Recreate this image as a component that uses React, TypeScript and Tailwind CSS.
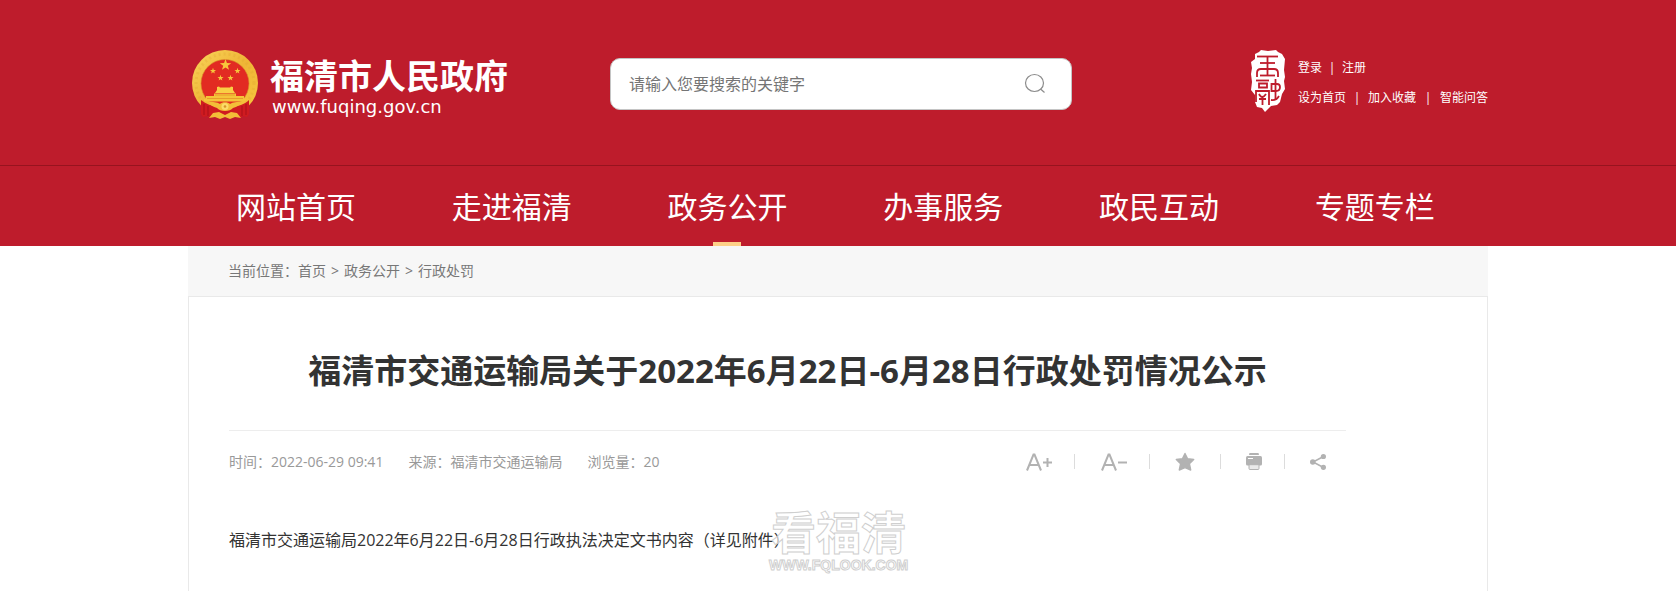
import React from 'react';

const navItems = ['网站首页', '走进福清', '政务公开', '办事服务', '政民互动', '专题专栏'];

const breadcrumbs = ['首页', '政务公开', '行政处罚'];

const star = (cx: number, cy: number, r: number) =>
  Array.from({ length: 10 }, (_, i) => {
    const radius = i % 2 === 0 ? r : r * 0.4;
    const angle = (Math.PI / 5) * i - Math.PI / 2;
    return `${cx + radius * Math.cos(angle)},${cy + radius * Math.sin(angle)}`;
  }).join(' ');

const Emblem = () => (
  <svg className="w-[68px] h-[70px]" viewBox="0 0 68 70" aria-hidden="true">
    <defs>
      <linearGradient id="gold" x1="0" y1="0" x2="1" y2="1">
        <stop offset="0" stopColor="#f9d65b" />
        <stop offset="0.5" stopColor="#efb536" />
        <stop offset="1" stopColor="#f7c93f" />
      </linearGradient>
    </defs>
    <circle cx="33" cy="33" r="33" fill="url(#gold)" />
    <circle cx="33" cy="33" r="29" fill="none" stroke="#dd9f2c" strokeWidth="3" strokeDasharray="2 3" opacity="0.25" />
    <circle cx="33" cy="33.500" r="24" fill="#e22b22" stroke="#d9902a" strokeWidth="0.6" />
    {/* Stars */}
    <polygon points={star(33.5, 15, 6)} fill="#f7c63c" />
    <polygon points={star(21, 21, 3.2)} fill="#f7c63c" />
    <polygon points={star(45.500, 21, 3.2)} fill="#f7c63c" />
    <polygon points={star(28.5, 28, 3.2)} fill="#f7c63c" />
    <polygon points={star(38.5, 28, 3.2)} fill="#f7c63c" />
    {/* Tiananmen gate */}
    <path d="M25 37 L27 36.500 L28 37.500 L38 37.500 L39 36.500 L41 37 L41 40 L43 43 L23 43 L25 40 Z" fill="#f9cf45" />
    <path d="M22 43.5 H44 V46 H52 V49 H54 V51.500 H12 V49 H14 V46 H22 Z" fill="#f5c43a" />
    <path d="M23 45 H43 M15 48.500 H51" stroke="#e38b25" strokeWidth="0.7" />
    {/* Ribbon and gear */}
    <path d="M9 50 C14 54 20 56 26 57 L40 57 C47 56 53 54 57 50 L57 64 L55 67 L51 66 L48 68 L44 66 L22 66 L18 68 L15 66 L11 67 L9 64 Z" fill="#cf1b20" />
    <path d="M12 54 V65 M16 56 V66 M50 56 V66 M54 54 V65" stroke="#a91019" strokeWidth="1" />
    <path
      d="M16 51.500 C21 52 25 52 28 54 C30 51.500 36 51.500 38 54 C41 52 45 52 50 51.500 C48 55 45 57 41 58 C38 62 28 62 25 58 C21 57 18 55 16 51.500 Z"
      fill="#f3be38"
    />
    <path d="M17 68 L21 63 L27 62 L33 65 L39 62 L45 63 L49 68 L43 67 L38 69 L33 67 L28 69 L23 67 Z" fill="#f3be38" />
    <circle cx="33" cy="56.500" r="3.500" fill="#fbdc69" />
    <circle cx="33" cy="56.500" r="1.300" fill="#d8932a" />
  </svg>
);

const Seal = () => (
  <svg className="w-[34px] h-[62px]" viewBox="0 0 34 62" aria-hidden="true">
    <path
      d="M8 2 L10 0 L17 1 L25 0 L27 2 L31 4 L34 9 L33 20 L34 27 L33 31 L34 39 L31 44 L29 52 L26 55 L20 56 L16 60 L14 62 L11 58 L6 57 L4 52 L4 45 L0 40 L1 32 L0 24 L1 18 L0 12 L4 9 L4 4 Z"
      fill="#fff"
    />
    {/* Seal script strokes */}
    <g fill="none" stroke="#be1c2c" strokeWidth="1.8">
      <path d="M6 6.500 H27" />
      <path d="M16.500 7 V25" />
      <path d="M9 13 H24" />
      <path d="M6 27 V23 Q6 19 10 19 H23 Q27 19 27 23 V27" />
      <path d="M9 25.500 H24" />
      <path d="M5 30.500 H18" />
      <path d="M8 33.500 H16 V37.500 H8 Z" />
      <path d="M5 52 V41 H18 V55" />
      <path d="M8 44 Q11 50 15 44 M8 49 H15 M11.500 47 V55" />
      <path d="M24.500 29 V50" />
      <path d="M20.500 34 H26 Q29 34 29 37 Q29 41 25 41 H20.500 Z" />
      <path d="M20 50 Q25 51 28 46" />
    </g>
  </svg>
);

const Header = () => (
  <header className="bg-[#be1c2c] text-white">
    <div className="max-w-[1300px] mx-auto pt-[50px] pb-[45px] grid grid-cols-[422px_462px_1fr] items-start">
      {/* Logo */}
      <a href="#home" className="flex pl-1 gap-[10px]">
        <Emblem />
        <span className="pt-[6px]">
          <span className="block text-[34px] leading-10 font-bold">福清市人民政府</span>
          <span className="block pl-[2px] text-lg leading-[22px] font-['DejaVu_Sans',sans-serif]">www.fuqing.gov.cn</span>
        </span>
      </a>

      {/* Search */}
      <form className="mt-2 flex items-center h-[52px] bg-white border border-[#c4c4c4] rounded-[10px] pl-[18px] pr-6">
        <input
          type="text"
          aria-label="搜索"
          placeholder="请输入您要搜索的关键字"
          className="flex-1 min-w-0 text-base text-[#333] placeholder:text-[#757575] outline-none"
        />
        <button type="button" aria-label="搜索">
          <svg className="w-6 h-6" viewBox="0 0 24 24" fill="none" stroke="#8c8c8c" strokeWidth="1.200">
            <ellipse cx="11.500" cy="11" rx="9" ry="8.500" />
            <path d="M17.500 17 L21.500 20.500" />
          </svg>
        </button>
      </form>

      {/* User links */}
      <div className="flex justify-end gap-[13px]">
        <Seal />
        <div className="pt-2 flex flex-col gap-[10px] text-xs leading-5">
          <div className="flex">
            <a href="#login">登录</a>
            <span className="w-5 text-center">|</span>
            <a href="#register">注册</a>
          </div>
          <div className="flex">
            <a href="#set-home">设为首页</a>
            <span className="w-[22px] text-center">|</span>
            <a href="#favorite">加入收藏</a>
            <span className="w-6 text-center">|</span>
            <a href="#qa">智能问答</a>
          </div>
        </div>
      </div>
    </div>

    {/* Navigation */}
    <nav className="border-t border-[#97131f]">
      <ul className="max-w-[1300px] mx-auto flex">
        {navItems.map((item) => (
          <li key={item} className="w-[16.6%]">
            <a href={`#${item}`} className="flex flex-col items-center h-20 pt-[6px] text-[30px] leading-[70px]">
              {item}
              {item === '政务公开' && <span className="w-7 h-1 shrink-0 bg-[#fdd088]" />}
            </a>
          </li>
        ))}
      </ul>
    </nav>
  </header>
);

const Divider = () => <span className="w-px h-[15px] bg-[#dcdcdc]" />;

const Toolbar = () => (
  <div className="flex items-center text-[#b2b2b2]">
    <button type="button" aria-label="放大字体">
      <svg className="w-[26px] h-5" viewBox="0 0 26 20" fill="none" stroke="currentColor" strokeWidth="2">
        <path d="M1 18.500 L7.500 2.500 H8.500 L15 18.500 M3.500 13 H12.500" />
        <path d="M17 10.500 H26 M21.500 6 V15" />
      </svg>
    </button>
    <span className="px-[22px] flex"><Divider /></span>
    <button type="button" aria-label="缩小字体" className="ml-1">
      <svg className="w-[26px] h-5" viewBox="0 0 26 20" fill="none" stroke="currentColor" strokeWidth="2">
        <path d="M1 18.500 L7.500 2.500 H8.500 L15 18.500 M3.500 13 H12.500" />
        <path d="M17 10.500 H26" />
      </svg>
    </button>
    <span className="pl-[22px] pr-[25px] flex"><Divider /></span>
    <button type="button" aria-label="收藏">
      <svg className="w-5 h-5" viewBox="0 0 20 20" fill="currentColor" stroke="currentColor" strokeWidth="1.400" strokeLinejoin="round">
        <path d="M10 1.500 L12.600 6.800 L18.700 7.500 L14.400 11.700 L15.700 18 L10 15.600 L4.300 18 L5.600 11.700 L1.300 7.500 L7.400 6.800 Z" />
      </svg>
    </button>
    <span className="px-[25px] flex"><Divider /></span>
    <button type="button" aria-label="打印">
      <svg className="w-4 h-5" viewBox="0 0 16 20" fill="currentColor">
        <path d="M3.500 1 H12.500 L13 3 H3 Z" />
        <path d="M1.500 4 H14.500 Q16 4 16 5.500 V12 Q16 13.500 14.500 13.500 H1.500 Q0 13.500 0 12 V5.500 Q0 4 1.500 4 Z" />
        <path d="M3 12.700 H13 V16.500 Q13 17.500 12 17.500 H4 Q3 17.500 3 16.500 Z" fill="#e9e9e9" stroke="currentColor" />
        <path d="M2 6.500 H7" stroke="#fff" strokeWidth="1" />
      </svg>
    </button>
    <span className="pl-[22px] pr-[25px] flex"><Divider /></span>
    <button type="button" aria-label="分享">
      <svg className="w-4 h-5" viewBox="0 0 16 20" fill="currentColor">
        <path d="M13.500 4.500 L3 10 L13.500 15.500" fill="none" stroke="currentColor" strokeWidth="1.500" />
        <circle cx="2.800" cy="10" r="2.800" />
        <circle cx="13.400" cy="4.500" r="2.600" />
        <circle cx="13.400" cy="15.300" r="2.600" />
      </svg>
    </button>
  </div>
);

const App = () => {
  return (
    <div className="min-h-screen flex flex-col bg-white font-['Open_Sans','Noto_Sans_CJK_SC',sans-serif]">
      <Header />

      <main className="w-full max-w-[1300px] mx-auto flex-1 flex flex-col">
        {/* Breadcrumb */}
        <div className="h-[50px] px-10 flex items-center bg-[#f7f7f7] text-sm text-[#777]">
          <span>当前位置：</span>
          {breadcrumbs.map((crumb, index) => (
            <React.Fragment key={crumb}>
              {index > 0 && <span className="w-[18px] text-center">&gt;</span>}
              <a href={`#${crumb}`}>{crumb}</a>
            </React.Fragment>
          ))}
        </div>

        {/* Article */}
        <article className="relative flex-1 border border-b-0 border-[#e9e9e9] pl-10 pr-[141px]">
          <h1 className="pt-[50px] pb-[35px] text-center text-[33px] leading-[48px] font-bold text-[#333]">
            福清市交通运输局关于2022年6月22日-6月28日行政处罚情况公示
          </h1>

          <div className="border-t border-[#ededed] h-[62px] pr-5 flex items-center justify-between">
            <div className="flex gap-[25px] text-sm text-[#999]">
              <span>时间：2022-06-29 09:41</span>
              <span>来源：福清市交通运输局</span>
              <span>浏览量：20</span>
            </div>
            <Toolbar />
          </div>

          <p className="pt-[34px] text-base leading-7 text-[#333]">
            福清市交通运输局2022年6月22日-6月28日行政执法决定文书内容（详见附件）
          </p>

          {/* Watermark */}
          <div className="absolute left-[580px] top-[212px] flex flex-col text-center font-bold text-white/60 pointer-events-none">
            <span className="text-[45px] leading-[48px] [-webkit-text-stroke:1px_#cfcfcf]">看福清</span>
            <span className="text-sm leading-4 [-webkit-text-stroke:1px_#cfcfcf] font-['Liberation_Sans',sans-serif]">WWW.FQLOOK.COM</span>
          </div>
        </article>
      </main>
    </div>
  );
};

export default App;
